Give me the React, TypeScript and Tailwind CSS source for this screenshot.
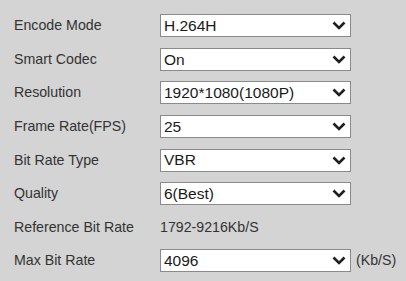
const rows = [
  { label: "Encode Mode", value: "H.264H" },
  { label: "Smart Codec", value: "On" },
  { label: "Resolution", value: "1920*1080(1080P)" },
  { label: "Frame Rate(FPS)", value: "25" },
  { label: "Bit Rate Type", value: "VBR" },
  { label: "Quality", value: "6(Best)" },
];

function Chevron() {
  return (
    <svg width="14" height="9" viewBox="0 0 14 9" className="shrink-0">
      <path d="M1.5 1.5 L7 7 L12.5 1.5" fill="none" stroke="#1f1f1f" strokeWidth="2.6" />
    </svg>
  );
}

function Select({ value }: { value: string }) {
  return (
    <div className="flex h-[23px] w-[191px] shrink-0 items-center justify-between border border-[#8a8a8a] bg-white pl-[3px] pr-[4px] text-[15.5px] text-[#1a1a1a]">
      <span className="leading-none">{value}</span>
      <Chevron />
    </div>
  );
}

export default function App() {
  return (
    <div className="h-[281px] w-[406px] bg-[#d4d4d4] pl-[14px] pt-[9px] font-['Liberation_Sans',Arial,sans-serif] text-[14.2px] text-[#333]">
      {rows.map((r) => (
        <div key={r.label} className="flex h-[33.6px] items-center">
          <div className="w-[146px] shrink-0">{r.label}</div>
          <Select value={r.value} />
        </div>
      ))}
      <div className="flex h-[33.6px] items-center">
        <div className="w-[146px] shrink-0">Reference Bit Rate</div>
        <div>1792-9216Kb/S</div>
      </div>
      <div className="flex h-[33.6px] items-center">
        <div className="w-[146px] shrink-0">Max Bit Rate</div>
        <Select value="4096" />
        <div className="ml-[5px] shrink-0">(Kb/S)</div>
      </div>
    </div>
  );
}
